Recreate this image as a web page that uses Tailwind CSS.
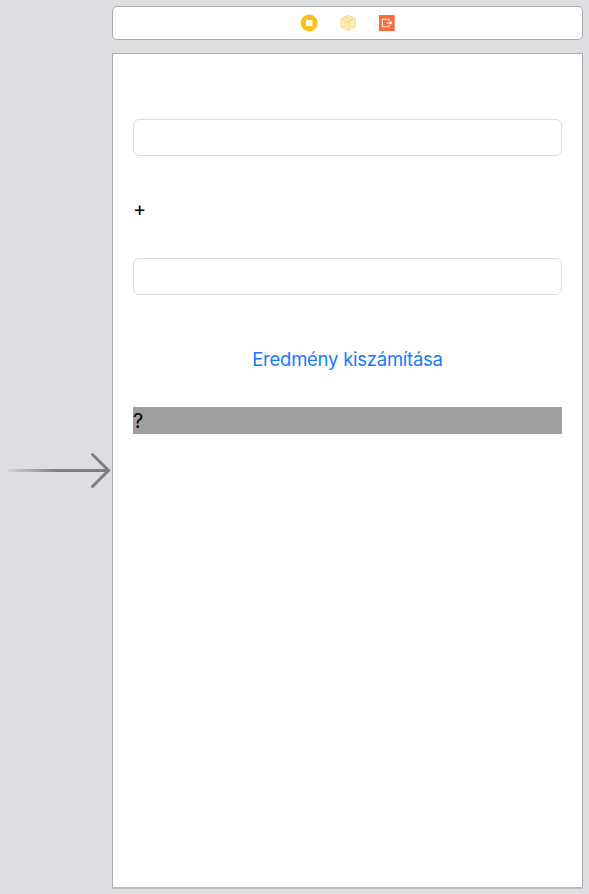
<!DOCTYPE html>
<html lang="hu">
<head>
<meta charset="utf-8">
<title>Storyboard</title>
<script src="https://cdn.jsdelivr.net/npm/@tailwindcss/browser@4"></script>
</head>
<body class="bg-[#dddee2] h-[894px] w-[589px] overflow-hidden flex font-['Inter',sans-serif] text-black">
  <!-- Entry point arrow -->
  <aside class="w-[112px] shrink-0 pt-[450px]">
    <svg class="block" width="112" height="42" viewBox="0 0 112 42" fill="none">
      <defs>
        <linearGradient id="fade" gradientUnits="userSpaceOnUse" x1="7" y1="0" x2="58" y2="0">
          <stop offset="0" stop-color="#7d7e7e" stop-opacity="0.1"/>
          <stop offset="1" stop-color="#7d7e7e"/>
        </linearGradient>
      </defs>
      <path d="M8 19H109V22H8Z" fill="url(#fade)"/>
      <path d="M92.5 4.5L108.5 20.5L92.5 36.5" stroke="#7d7e7e" stroke-width="3" stroke-linecap="round"/>
    </svg>
  </aside>

  <div class="w-[471px] shrink-0 pt-[6px] flex flex-col gap-[13px]">
    <!-- Scene dock -->
    <header class="h-[34px] shrink-0 bg-white border border-[#a9a9aa] rounded-[5px] flex items-center justify-center gap-[21px]">
      <svg width="18" height="18" viewBox="0 0 18 18">
        <circle cx="9.2" cy="9" r="8.5" fill="#fcc01e"/>
        <rect x="6" y="6" width="6.4" height="6" rx="0.8" fill="#fff"/>
      </svg>
      <svg width="18" height="18" viewBox="0 0 18 18" stroke-linejoin="round">
        <path d="M8.9 1.3L16.2 4.2V12.7L9.8 16.5L2 13.2V5.1Z" fill="#fdedbd" stroke="#f9d783"/>
        <path d="M2 5.1L9.5 7.8L16.2 4.2M9.5 7.8L9.8 16.5M5.5 3.2L12.8 6" fill="none" stroke="#f9d783"/>
        <path d="M4.4 8.3L7 9.2V11L5.7 11.4V13" fill="none" stroke="#f9d783" stroke-width="0.8"/>
      </svg>
      <svg width="18" height="18" viewBox="0 0 18 18" fill="none">
        <path d="M1 1H16.7V17H1Z" fill="#fc6c3b"/>
        <path d="M10.9 7V5.3H4.3V12.7H10.9V11" stroke="#fff" stroke-opacity="0.9" stroke-width="1.1"/>
        <path d="M8.5 9H12.5" stroke="#fff" stroke-width="1.1"/>
        <path d="M12 7L14.6 9L12 11Z" fill="#fff"/>
      </svg>
    </header>

    <!-- View controller canvas -->
    <main class="h-[836px] shrink-0 bg-white border border-[#acacad] border-b-2 border-b-[#bdbdbe] px-[20px] pt-[65px] flex flex-col">
      <input type="text" aria-label="1" class="block h-[37px] w-full shrink-0 rounded-[6px] border border-[#dcdcdc] bg-white px-2">
      <div class="mt-[40px] h-[26px] text-[20px] leading-[26px]">+</div>
      <input type="text" aria-label="2" class="mt-[36px] block h-[37px] w-full shrink-0 rounded-[6px] border border-[#dcdcdc] bg-white px-2">
      <button type="button" class="mt-[51px] h-[26px] self-center whitespace-nowrap text-[18.5px] leading-[26px] tracking-[-0.25px] text-[#127bff]">Eredmény kiszámítása</button>
      <div class="mt-[35px] h-[27px] bg-[#9f9f9f] text-[20px] leading-[29px]">?</div>
    </main>
  </div>
</body>
</html>
